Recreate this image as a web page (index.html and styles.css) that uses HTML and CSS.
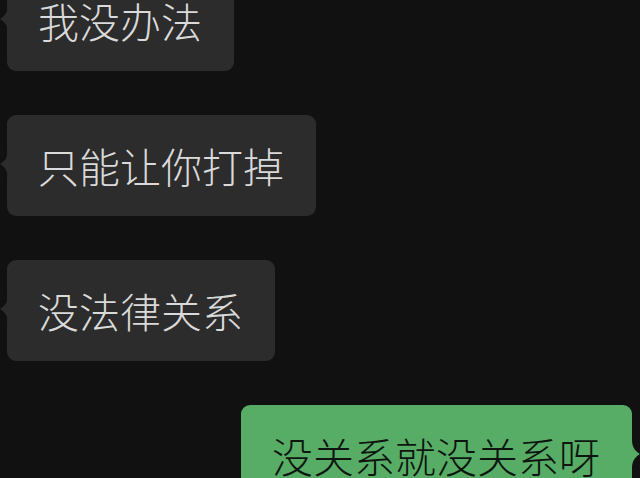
FILE: index.html
```html
<!DOCTYPE html>
<html lang="zh-CN">
<head>
<meta charset="utf-8">
<title>Chat</title>
<link rel="stylesheet" href="styles.css">
</head>
<body>
<div class="chat">
  <div class="msg left">我没办法</div>
  <div class="msg left">只能让你打掉</div>
  <div class="msg left">没法律关系</div>
  <div class="msg right">没关系就没关系呀</div>
</div>
</body>
</html>
```
FILE: styles.css
```css
html, body {
  margin: 0;
  padding: 0;
  background: #111111;
  height: 100%;
  overflow: hidden;
}
.chat {
  display: flex;
  flex-direction: column;
  align-items: flex-start;
  gap: 44px;
  margin-top: -30px;
  padding: 0 8px 0 7px;
  font-family: "Noto Sans CJK SC", "Noto Sans", sans-serif;
  font-size: 41px;
  line-height: 41px;
  font-weight: 300;
}
.msg {
  position: relative;
  padding: 30px 32px 30px 31px;
  border-radius: 9px;
  white-space: nowrap;
}
.left {
  background: #2c2c2c;
  color: #dadada;
}
.right {
  align-self: flex-end;
  background: #58ad66;
  color: #0d160e;
}
.msg::before {
  content: "";
  position: absolute;
  top: 35px;
  width: 8px;
  height: 28px;
  background: inherit;
}
.left::before {
  left: -7px;
  clip-path: path('M8 0 C8 9 3 12 0 14 C3 16 8 19 8 28 Z');
}
.right::before {
  right: -8px;
  clip-path: path('M0 0 C0 9 5 12 8 14 C5 16 0 19 0 28 Z');
}
```
